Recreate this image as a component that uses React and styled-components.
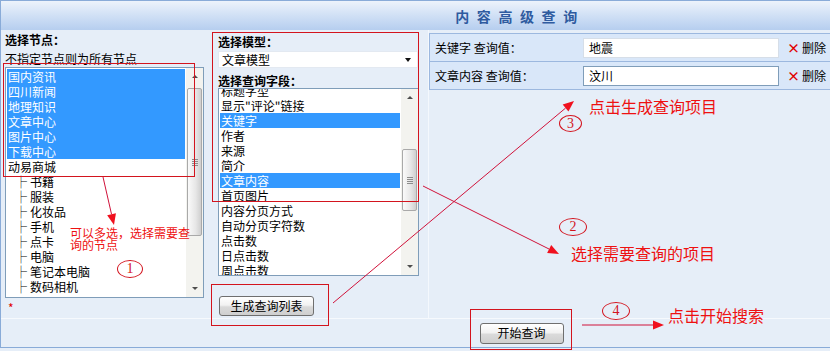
import React from 'react';
import styled, { createGlobalStyle } from 'styled-components';

const Global = createGlobalStyle`
  html, body { margin: 0; padding: 0; background: #E6EEF8; }
  body {
    font-family: "Noto Sans CJK SC", "Noto Sans", sans-serif;
    font-size: 12px;
    color: #000;
  }
  * { box-sizing: border-box; }
`;

const Stage = styled.div`
  position: relative;
  width: 830px;
  height: 351px;
  overflow: hidden;
  background: #E6EEF8;
`;

const Frame = styled.div`
  width: 831px;
  height: 348px;
  border: 1px solid #89ABD8;
  display: flex;
  flex-direction: column;
`;

const Header = styled.div`
  flex: none;
  height: 29px;
  background: linear-gradient(#EDF3FB 0%, #D3E2F6 45%, #B6CEEF 100%);
  display: flex;
  align-items: center;
  justify-content: center;
  padding-left: 202px;
`;

const Title = styled.h1`
  margin: 0 -7px 0 0;
  font-size: 14px;
  line-height: 16px;
  font-weight: bold;
  letter-spacing: 7.6px;
  color: #2F5B9F;
`;

const Body = styled.div`
  flex: none;
  height: 289px;
  display: flex;
  border-bottom: 1px solid #F6F9FD;
`;

const Column = styled.div`
  flex: ${p => (p.$grow ? 1 : 'none')};
  width: ${p => (p.$w ? `${p.$w}px` : 'auto')};
  padding-left: ${p => p.$pl || 0}px;
  padding-top: ${p => p.$pt || 0}px;
  border-left: ${p => (p.$line ? '1px solid #F4F8FD' : 'none')};
  display: flex;
  flex-direction: column;
  align-items: flex-start;
`;

const Label = styled.div`
  font-weight: bold;
  font-size: 12px;
  line-height: ${p => p.$lh || 15}px;
  margin-top: ${p => p.$mt || 0}px;
  white-space: nowrap;
`;

const Hint = styled.div`
  font-size: 12px;
  line-height: 15px;
  margin-top: ${p => p.$mt || 0}px;
  white-space: nowrap;
`;

const ListBox = styled.div`
  width: ${p => p.$w}px;
  height: ${p => p.$h}px;
  margin-top: ${p => p.$mt || 0}px;
  margin-left: ${p => p.$ml || 0}px;
  border: 1px solid #7F9DB9;
  background: #fff;
  display: flex;
  flex: none;
`;

const Items = styled.div`
  flex: 1;
  overflow: hidden;
  padding: 1px;
`;

const ItemsInner = styled.div`
  margin-top: ${p => p.$offset || 0}px;
`;

const Item = styled.div`
  height: 15px;
  line-height: 15px;
  font-size: 12px;
  white-space: nowrap;
  padding-left: ${p => 1 + (p.$indent || 0)}px;
  background: ${p => (p.$sel ? '#3399FF' : 'transparent')};
  color: ${p => (p.$sel ? '#fff' : '#000')};
`;

const TreeMark = styled.span`
  margin-right: 3px;
`;

const ScrollBar = styled.div`
  width: 17px;
  flex: none;
  background: #F3F3EF;
  display: flex;
  flex-direction: column;
`;

const ScrollBtn = styled.div`
  height: 17px;
  flex: none;
  display: flex;
  align-items: center;
  justify-content: center;
  &::before {
    content: '';
    width: 0;
    height: 0;
    border-left: 3px solid transparent;
    border-right: 3px solid transparent;
    ${p => (p.$down ? 'border-top: 3px solid #4D4D4D;' : 'border-bottom: 3px solid #4D4D4D;')}
  }
`;

const Track = styled.div`
  flex: 1;
`;

const Thumb = styled.div`
  margin: ${p => p.$top}px 0 0 1px;
  width: 15px;
  height: ${p => p.$h}px;
  border: 1px solid #A9A9A9;
  border-radius: 2px;
  background: linear-gradient(to right, #FAFAFA, #E6E6E6 60%, #CFCFCF);
  display: flex;
  flex-direction: column;
  align-items: center;
  justify-content: center;
  gap: 1px;
`;

const Grip = styled.span`
  width: 6px;
  height: 1px;
  background: #8C8C8C;
`;

const Star = styled.div`
  color: #E00000;
  font-size: 12px;
  line-height: 12px;
  margin: 4px 0 0 3px;
`;

const SelectBox = styled.div`
  width: 200px;
  height: 17px;
  margin-top: 2px;
  background: #fff;
  border: 1px solid #E3E9F1;
  display: flex;
  align-items: center;
  justify-content: space-between;
  padding: 0 6px 0 3px;
  font-size: 12px;
  line-height: 15px;
  &::after {
    content: '';
    border-left: 3.5px solid transparent;
    border-right: 3.5px solid transparent;
    border-top: 4px solid #111;
  }
`;

const Button = styled.button`
  width: ${p => p.$w}px;
  height: ${p => p.$h}px;
  margin-top: ${p => p.$mt || 0}px;
  margin-left: ${p => p.$ml || 0}px;
  padding: 0;
  border: 1px solid #6F6F6F;
  border-radius: 3px;
  background: linear-gradient(#FFFFFF 0%, #F2F2F2 45%, #DADADA 55%, #CFCFCF 100%);
  font-family: "Noto Sans CJK SC", sans-serif;
  font-size: 12px;
  line-height: 14px;
  color: #000;
`;

const QueryTable = styled.div`
  width: 402px;
  border: 1px solid #9CB8DF;
  border-right: none;
  background: #D9E7F9;
`;

const QueryRow = styled.div`
  height: ${p => p.$h}px;
  display: flex;
  align-items: center;
  border-top: ${p => (p.$first ? 'none' : '1px solid #9CB8DF')};
`;

const QueryLabel = styled.div`
  width: 153px;
  padding-left: 5px;
  font-size: 12px;
  white-space: nowrap;
`;

const ValueInput = styled.div`
  width: 196px;
  height: 20px;
  background: #fff;
  border: 1px solid ${p => (p.$focus ? '#7F9DB9' : '#D6DEE8')};
  padding-left: 5px;
  font-size: 12px;
  line-height: 18px;
`;

const DeleteLink = styled.span`
  margin-left: 8px;
  font-size: 12px;
  white-space: nowrap;
  display: flex;
  align-items: center;
  gap: 2px;
`;

const Cross = styled.b`
  color: #E00000;
  font-size: 13px;
  line-height: 12px;
`;

const Footer = styled.div`
  flex: 1;
  display: flex;
  align-items: center;
  justify-content: center;
  padding-left: 212px;
`;

/* ---- annotation overlay ---- */
const Overlay = styled.svg`
  position: absolute;
  left: 0;
  top: 0;
  pointer-events: none;
`;

const RedBox = styled.div`
  position: absolute;
  left: ${p => p.$x}px;
  top: ${p => p.$y}px;
  width: ${p => p.$w}px;
  height: ${p => p.$h}px;
  border: 1px solid #D3141E;
  pointer-events: none;
`;

const Note = styled.div`
  position: absolute;
  left: ${p => p.$x}px;
  top: ${p => p.$y}px;
  color: #EE1111;
  font-size: ${p => p.$size}px;
  line-height: ${p => p.$size}px;
  white-space: nowrap;
`;

const Circled = styled.div`
  position: absolute;
  left: ${p => p.$x}px;
  top: ${p => p.$y}px;
  width: ${p => p.$w}px;
  height: ${p => p.$h}px;
  border: 1px solid #D3141E;
  border-radius: 50%;
  display: flex;
  align-items: center;
  justify-content: center;
  font-family: "Liberation Serif", serif;
  font-size: 14px;
  color: #D3141E;
`;

const leftItems = [
  { t: '国内资讯', sel: true },
  { t: '四川新闻', sel: true },
  { t: '地理知识', sel: true },
  { t: '文章中心', sel: true },
  { t: '图片中心', sel: true },
  { t: '下载中心', sel: true },
  { t: '动易商城' },
  { t: '书籍', sub: true },
  { t: '服装', sub: true },
  { t: '化妆品', sub: true },
  { t: '手机', sub: true },
  { t: '点卡', sub: true },
  { t: '电脑', sub: true },
  { t: '笔记本电脑', sub: true },
  { t: '数码相机', sub: true },
];

const midItems = [
  { t: '标题字型' },
  { t: '显示"评论"链接' },
  { t: '关键字', sel: true },
  { t: '作者' },
  { t: '来源' },
  { t: '简介' },
  { t: '文章内容', sel: true },
  { t: '首页图片' },
  { t: '内容分页方式' },
  { t: '自动分页字符数' },
  { t: '点击数' },
  { t: '日点击数' },
  { t: '周点击数' },
];

function Scroll({ top, h }) {
  return (
    <ScrollBar>
      <ScrollBtn />
      <Track>
        <Thumb $top={top} $h={h}>
          <Grip />
          <Grip />
          <Grip />
          <Grip />
        </Thumb>
      </Track>
      <ScrollBtn $down />
    </ScrollBar>
  );
}

function ListItems({ items, offset }) {
  return (
    <Items>
      <ItemsInner $offset={offset}>
        {items.map((it, i) => (
          <Item key={i} $sel={it.sel} $indent={it.sub ? 7 : 0}>
            {it.sub && <TreeMark>├</TreeMark>}
            {it.t}
          </Item>
        ))}
      </ItemsInner>
    </Items>
  );
}

function arrow(x1, y1, x2, y2, len = 11, half = 4.5) {
  const dx = x2 - x1;
  const dy = y2 - y1;
  const d = Math.hypot(dx, dy);
  const ux = dx / d;
  const uy = dy / d;
  const bx = x2 - ux * len;
  const by = y2 - uy * len;
  const px = -uy * half;
  const py = ux * half;
  return {
    x1, y1, x2: bx, y2: by,
    head: `${x2},${y2} ${bx + px},${by + py} ${bx - px},${by - py}`,
  };
}

const arrows = [
  arrow(103, 177, 114, 225),
  arrow(423, 186, 559, 254),
  arrow(333, 303, 574, 101),
  arrow(582, 325, 664, 325),
];

export default function App() {
  return (
    <Stage>
      <Global />
      <Frame>
        <Header>
          <Title>内容高级查询</Title>
        </Header>
        <Body>
          <Column $w={206} $pl={4} $pt={2}>
            <Label>选择节点：</Label>
            <Hint $mt={4}>不指定节点则为所有节点</Hint>
            <ListBox $w={199} $h={231} $mt={1}>
              <ListItems items={leftItems} offset={0} />
              <Scroll top={3} h={148} />
            </ListBox>
            <Star>*</Star>
          </Column>
          <Column $w={221} $pl={11} $pt={4}>
            <Label>选择模型：</Label>
            <SelectBox>文章模型</SelectBox>
            <Label $mt={6} $lh={14}>选择查询字段：</Label>
            <ListBox $w={201} $h={188}>
              <ListItems items={midItems} offset={-7} />
              <Scroll top={43} h={62} />
            </ListBox>
            <Button $w={95} $h={20} $mt={20} $ml={1}>生成查询列表</Button>
          </Column>
          <Column $grow $line $pt={3}>
            <QueryTable>
              <QueryRow $first $h={27}>
                <QueryLabel>关键字 查询值：</QueryLabel>
                <ValueInput>地震</ValueInput>
                <DeleteLink><Cross>×</Cross>删除</DeleteLink>
              </QueryRow>
              <QueryRow $h={28}>
                <QueryLabel>文章内容 查询值：</QueryLabel>
                <ValueInput $focus>汶川</ValueInput>
                <DeleteLink><Cross>×</Cross>删除</DeleteLink>
              </QueryRow>
            </QueryTable>
          </Column>
        </Body>
        <Footer>
          <Button $w={84} $h={21}>开始查询</Button>
        </Footer>
      </Frame>

      <Overlay width="830" height="351" viewBox="0 0 830 351">
        {arrows.map((a, i) => (
          <g key={i}>
            <line x1={a.x1} y1={a.y1} x2={a.x2} y2={a.y2} stroke="#D0123A" strokeWidth="1" />
            <polygon points={a.head} fill="#F0101E" />
          </g>
        ))}
      </Overlay>

      <RedBox $x={3} $y={63} $w={192} $h={114} />
      <RedBox $x={212} $y={32} $w={207} $h={170} />
      <RedBox $x={211} $y={284} $w={118} $h={42} />
      <RedBox $x={470} $y={309} $w={102} $h={41} />

      <Note $x={70} $y={227} $size={12}>可以多选，选择需要查<br />询的节点</Note>
      <Note $x={589} $y={98} $size={16}>点击生成查询项目</Note>
      <Note $x={571} $y={245} $size={16}>选择需要查询的项目</Note>
      <Note $x={668} $y={307} $size={16}>点击开始搜索</Note>

      <Circled $x={117} $y={260} $w={26} $h={18}>1</Circled>
      <Circled $x={559} $y={218} $w={28} $h={18}>2</Circled>
      <Circled $x={559} $y={115} $w={23} $h={17}>3</Circled>
      <Circled $x={602} $y={302} $w={28} $h={18}>4</Circled>
    </Stage>
  );
}
